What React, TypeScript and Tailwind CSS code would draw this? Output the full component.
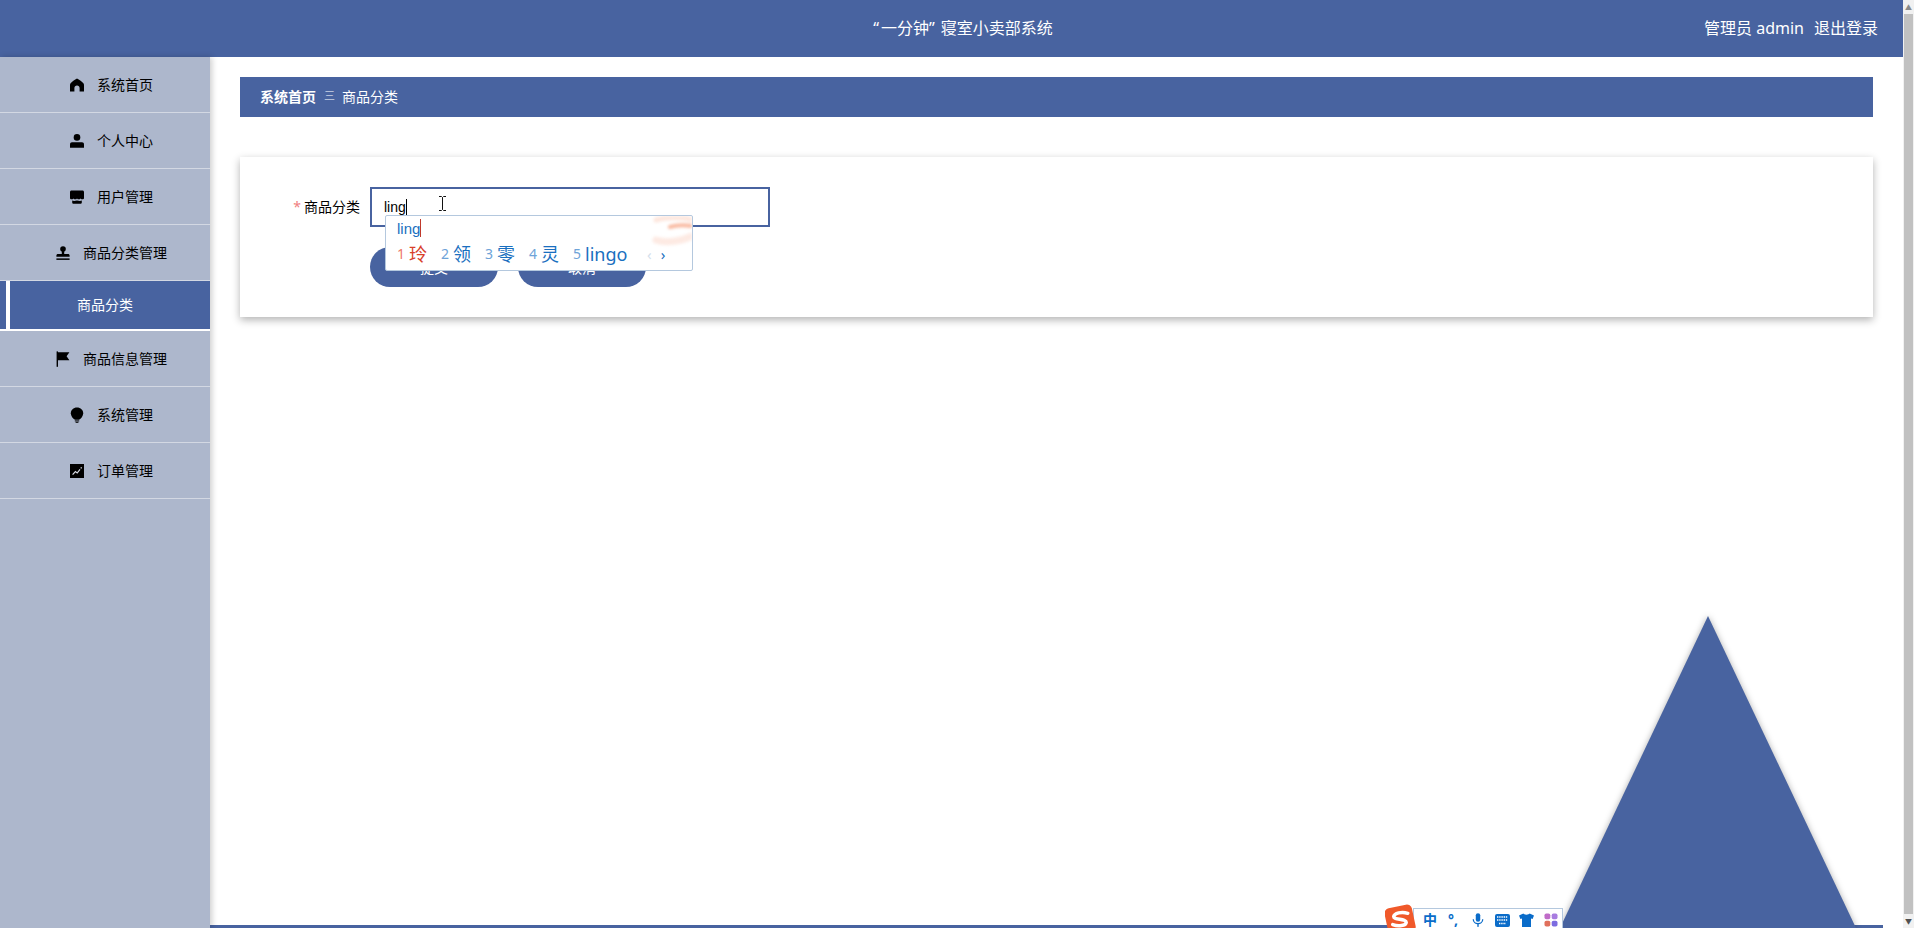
const menu = [
  { label: "系统首页", icon: <HomeIcon /> },
  { label: "个人中心", icon: <UserIcon /> },
  { label: "用户管理", icon: <ShopIcon /> },
  { label: "商品分类管理", icon: <StampIcon /> },
];

const menuBottom = [
  { label: "商品信息管理", icon: <FlagIcon /> },
  { label: "系统管理", icon: <BulbIcon /> },
  { label: "订单管理", icon: <ChartIcon /> },
];

const candidates = [
  { no: "2", word: "领" },
  { no: "3", word: "零" },
  { no: "4", word: "灵" },
];

function HomeIcon() {
  return (
    <svg viewBox="0 0 14 14" className="h-[14px] w-[14px]" fill="#000">
      <path d="M7 0.5 C9 1.5 12.5 4 13.6 5.6 C14 6.2 14 6.8 14 7.4 V13.5 H9.6 V10 C9.6 8.6 8.5 7.6 7 7.6 C5.5 7.6 4.4 8.6 4.4 10 V13.5 H0 V7.4 C0 6.8 0 6.2 0.4 5.6 C1.5 4 5 1.5 7 0.5 Z" />
    </svg>
  );
}

function UserIcon() {
  return (
    <svg viewBox="0 0 14 14" className="h-[14px] w-[14px]" fill="#000">
      <circle cx="7" cy="3.4" r="3.3" />
      <path d="M2 8.2 H12 C13.2 8.2 14 9 14 10.2 V13.8 H0 V10.2 C0 9 0.8 8.2 2 8.2 Z" />
    </svg>
  );
}

function ShopIcon() {
  return (
    <svg viewBox="0 0 14 14" className="h-[14px] w-[14px]" fill="#000">
      <path d="M1.6 0.5 H12.4 C13.4 0.5 14 1.2 14 2.2 V8.4 C13 9.6 11.4 9.6 10.5 8.4 C9.6 9.6 8 9.6 7 8.4 C6 9.6 4.4 9.6 3.5 8.4 C2.6 9.6 1 9.6 0 8.4 V2.2 C0 1.2 0.6 0.5 1.6 0.5 Z" />
      <path d="M2.2 10.6 C3.5 11.2 5 11 7 10.6 C9 11 10.5 11.2 11.8 10.6 V12.4 C11.8 13.2 11.2 13.8 10.4 13.8 H3.6 C2.8 13.8 2.2 13.2 2.2 12.4 Z" />
    </svg>
  );
}

function StampIcon() {
  return (
    <svg viewBox="0 0 14 14" className="h-[14px] w-[14px]" fill="#000">
      <circle cx="7" cy="3" r="2.8" />
      <path d="M5.8 5 H8.2 V8 H12 C13 8 13.6 8.6 13.6 9.6 V10.8 H0.4 V9.6 C0.4 8.6 1 8 2 8 H5.8 Z" />
      <rect x="0.4" y="12.4" width="13.2" height="1.5" />
    </svg>
  );
}

function FlagIcon() {
  return (
    <svg viewBox="0 0 14 16" className="h-[16px] w-[14px]" fill="#000">
      <rect x="0.6" y="0.4" width="1.4" height="15.4" />
      <path d="M2 1.2 H13.4 L10.6 5.2 L13.4 9.2 H2 Z" />
    </svg>
  );
}

function BulbIcon() {
  return (
    <svg viewBox="0 0 14 16" className="h-[16px] w-[14px]" fill="#000">
      <path d="M7 0.4 C10.6 0.4 13.2 2.9 13.2 6.2 C13.2 9.2 11 11.4 9 12.8 H5 C3 11.4 0.8 9.2 0.8 6.2 C0.8 2.9 3.4 0.4 7 0.4 Z" />
      <rect x="4.8" y="13.4" width="4.4" height="1" />
      <rect x="5.6" y="14.8" width="2.8" height="1" />
    </svg>
  );
}

function ChartIcon() {
  return (
    <svg viewBox="0 0 14 14" className="h-[14px] w-[14px]">
      <rect width="14" height="14" fill="#000" />
      <path d="M2.6 10.6 L5.4 7.6 L7.2 9 L10 5.4" fill="none" stroke="#d7dbe4" strokeWidth="1.2" />
      <rect x="10.6" y="3.2" width="1.3" height="1.3" fill="#d7dbe4" />
    </svg>
  );
}

function MenuRow({ label, icon }: { label: string; icon: React.ReactNode }) {
  return (
    <div className="flex h-[56px] items-center justify-center gap-[13px] border-b border-[#d3d8e3] pl-[13px] text-[14px] text-black">
      {icon}
      <span>{label}</span>
    </div>
  );
}

function SogouLogo() {
  return (
    <svg viewBox="0 0 30 30" className="h-[31px] w-[31px]">
      <rect x="1" y="2" width="27" height="27" rx="5" fill="#f0592a" transform="rotate(-12 15 15)" />
      <path d="M22 9 C16 7 9 9 8.5 12 C8 15.5 21 14 20.5 18 C20 21 13 22 7.5 20" fill="none" stroke="#fff" strokeWidth="3.4" strokeLinecap="round" />
    </svg>
  );
}

export default function App() {
  return (
    <div className="relative flex h-[928px] w-full overflow-hidden bg-white font-['Noto_Sans','Noto_Sans_CJK_SC',sans-serif]">
      <div className="flex min-w-0 flex-1 flex-col">
        <header className="flex h-[57px] shrink-0 items-center bg-[#4863a0] pb-[2px] pr-[25px] text-[16px] text-white">
          <div className="flex-1 pl-[222px] text-center">
            <span className="mr-[2px]">“</span>一分钟<span className="mr-[6px]">”</span>寝室小卖部系统
          </div>
          <div className="flex gap-[10px]">
            <span>管理员 admin</span>
            <span>退出登录</span>
          </div>
        </header>

        <div className="flex flex-1">
          <aside className="z-10 w-[210px] shrink-0 bg-[#adb7cc] shadow-[2px_0_6px_rgba(0,0,0,0.2)]">
            {menu.map((item) => (
              <MenuRow key={item.label} label={item.label} icon={item.icon} />
            ))}
            <div className="flex h-[50px] border-b-2 border-white bg-white">
              <div className="w-[6px] bg-[#4863a0]" />
              <div className="ml-[4px] flex flex-1 items-center justify-center bg-[#4863a0] pb-[2px] pr-[10px] text-[14px] text-white">
                商品分类
              </div>
            </div>
            {menuBottom.map((item) => (
              <MenuRow key={item.label} label={item.label} icon={item.icon} />
            ))}
          </aside>

          <main className="mr-[20px] flex-1 border-b-[3px] border-[#4863a0] pl-[30px] pr-[10px] pt-[20px]">
            <div className="flex h-[40px] items-center bg-[#4863a0] pb-[2px] pl-[20px] text-[14px] text-white">
              <span className="font-bold">系统首页</span>
              <span className="ml-[8px] mr-[7px] text-[11px] font-light">三</span>
              <span>商品分类</span>
            </div>

            <form className="mt-[40px] bg-white px-[10px] py-[30px] shadow-[0_3px_8px_rgba(0,0,0,0.3)]">
              <div className="flex h-[40px] items-center">
                <label className="w-[120px] -translate-y-px pr-[10px] text-right text-[14px] text-black">
                  <span className="mr-[3px] text-[#f08080]">*</span>
                  商品分类
                </label>
                <div className="flex h-[40px] w-[400px] items-center border-2 border-[#4863a0] pl-[12px] font-['Liberation_Sans',sans-serif] text-[14px] text-black">
                  ling
                  <span className="h-[16px] w-px bg-black" />
                </div>
              </div>
              <div className="mt-[20px] flex gap-[20px] pl-[120px]">
                <button type="button" className="h-[40px] w-[128px] rounded-full bg-[#4863a0] text-[14px] text-white">
                  提交
                </button>
                <button type="button" className="h-[40px] w-[128px] rounded-full bg-[#4863a0] text-[14px] text-white">
                  取消
                </button>
              </div>
            </form>
          </main>
        </div>
      </div>

      {/* browser scrollbar */}
      <div className="flex w-[11px] shrink-0 flex-col bg-[#f1f1f1]">
        <div className="flex h-[14px] items-center justify-center text-[7px] leading-none text-[#8a8a8a]">▲</div>
        <div className="mx-auto w-[9px] flex-1 bg-[#c1c1c1]" />
        <div className="flex h-[14px] items-center justify-center text-[7px] leading-none text-[#505050]">▼</div>
      </div>

      {/* big triangle in the corner */}
      <svg viewBox="0 0 296 312" className="absolute left-[1560px] top-[616px] h-[312px] w-[296px] drop-shadow-[0_0_3px_rgba(0,0,0,0.3)]">
        <polygon points="148,0 296,312 0,312" fill="#4863a0" />
      </svg>

      {/* mouse cursor */}
      <svg viewBox="0 0 9 15" className="absolute left-[438px] top-[196px] h-[15px] w-[9px]" fill="none" stroke="#111" strokeWidth="1">
        <path d="M1 0.5 H3.5 L4.5 1.5 L5.5 0.5 H8 M4.5 1.5 V13.5 M1 14.5 H3.5 L4.5 13.5 L5.5 14.5 H8" />
      </svg>

      {/* input method candidate window */}
      <div className="absolute left-[385px] top-[215px] h-[56px] w-[308px] overflow-hidden rounded-[2px] border border-[#b4c8de] bg-white text-[#1a6fc0]">
        <svg viewBox="0 0 44 34" className="absolute right-0 top-0 h-[34px] w-[44px] blur-[1.5px]" fill="none" strokeLinecap="round">
          <path d="M8 4 C18 1 36 1 44 4" stroke="#fde6dd" strokeWidth="5" />
          <path d="M22 11 C28 9 36 9 44 10" stroke="#f9b9a0" strokeWidth="4" />
          <path d="M8 24 C20 28 36 24 44 20" stroke="#fdeae3" strokeWidth="7" />
        </svg>
        <div className="relative flex h-[23px] items-center pl-[11px] pt-[1px] font-['Liberation_Sans',sans-serif] text-[15px] leading-none">
          ling
          <span className="h-[18px] w-px bg-[#c0392b]" />
        </div>
        <div className="relative mt-[1px] flex h-[28px] items-center pl-[11px] leading-none">
          <span className="flex w-[44px] items-center">
            <span className="mr-[4px] text-[14px] text-[#ee7a6a]">1</span>
            <span className="text-[18px] text-[#d8402a]">玲</span>
          </span>
          {candidates.map((c) => (
            <span key={c.no} className="flex w-[44px] items-center">
              <span className="mr-[4px] text-[14px] text-[#6ea3d8]">{c.no}</span>
              <span className="text-[18px]">{c.word}</span>
            </span>
          ))}
          <span className="flex w-[74px] items-center">
            <span className="mr-[4px] text-[14px] text-[#6ea3d8]">5</span>
            <span className="text-[18px]">lingo</span>
          </span>
          <span className="mr-[9px] text-[15px] text-[#d5e0ec]">‹</span>
          <span className="text-[15px]">›</span>
        </div>
      </div>

      {/* input method toolbar */}
      <div className="absolute left-[1385px] top-[904px] z-10">
        <SogouLogo />
      </div>
      <div className="absolute left-[1413px] top-[908px] flex h-[20px] w-[150px] items-center border-l border-r border-t border-[#b4c8de] bg-white pl-[9px] pt-[3px] text-[#0a6cc9]">
        <span className="mr-[11px] w-[14px] text-[14px] font-bold leading-none">中</span>
        <span className="mr-[12px] w-[12px] text-[14px] font-bold leading-none">°,</span>
        <svg viewBox="0 0 14 16" className="mr-[11px] h-[16px] w-[12px]" fill="#0a6cc9">
          <rect x="4.4" y="0" width="5.2" height="10" rx="2.6" />
          <path d="M1.5 7 C1.5 14 12.5 14 12.5 7" fill="none" stroke="#0a6cc9" strokeWidth="1.5" />
          <rect x="6.2" y="12" width="1.6" height="4" />
        </svg>
        <svg viewBox="0 0 15 13" className="mr-[9px] h-[13px] w-[15px]">
          <rect width="15" height="13" rx="2" fill="#0a6cc9" />
          <path d="M2 3 H13 M2 6 H13 M4 9.5 H11" stroke="#fff" strokeWidth="1.4" strokeDasharray="1.4 0.8" />
        </svg>
        <svg viewBox="0 0 15 14" className="mr-[10px] h-[14px] w-[15px]" fill="#0a6cc9">
          <path d="M4.4 0.5 C5.4 2 9.6 2 10.6 0.5 L15 2.5 L13.6 6 L12 5.6 V14 H3 V5.6 L1.4 6 L0 2.5 Z" />
        </svg>
        <svg viewBox="0 0 14 14" className="h-[14px] w-[14px]">
          <rect x="0.5" y="0.5" width="5.8" height="5.8" rx="1.8" fill="#c06cc8" />
          <rect x="7.7" y="0.5" width="5.8" height="5.8" rx="1.8" fill="#a87ce0" />
          <rect x="0.5" y="7.7" width="5.8" height="5.8" rx="1.8" fill="#e0705c" />
          <rect x="7.7" y="7.7" width="5.8" height="5.8" rx="1.8" fill="#7c6ce0" />
        </svg>
      </div>
    </div>
  );
}
